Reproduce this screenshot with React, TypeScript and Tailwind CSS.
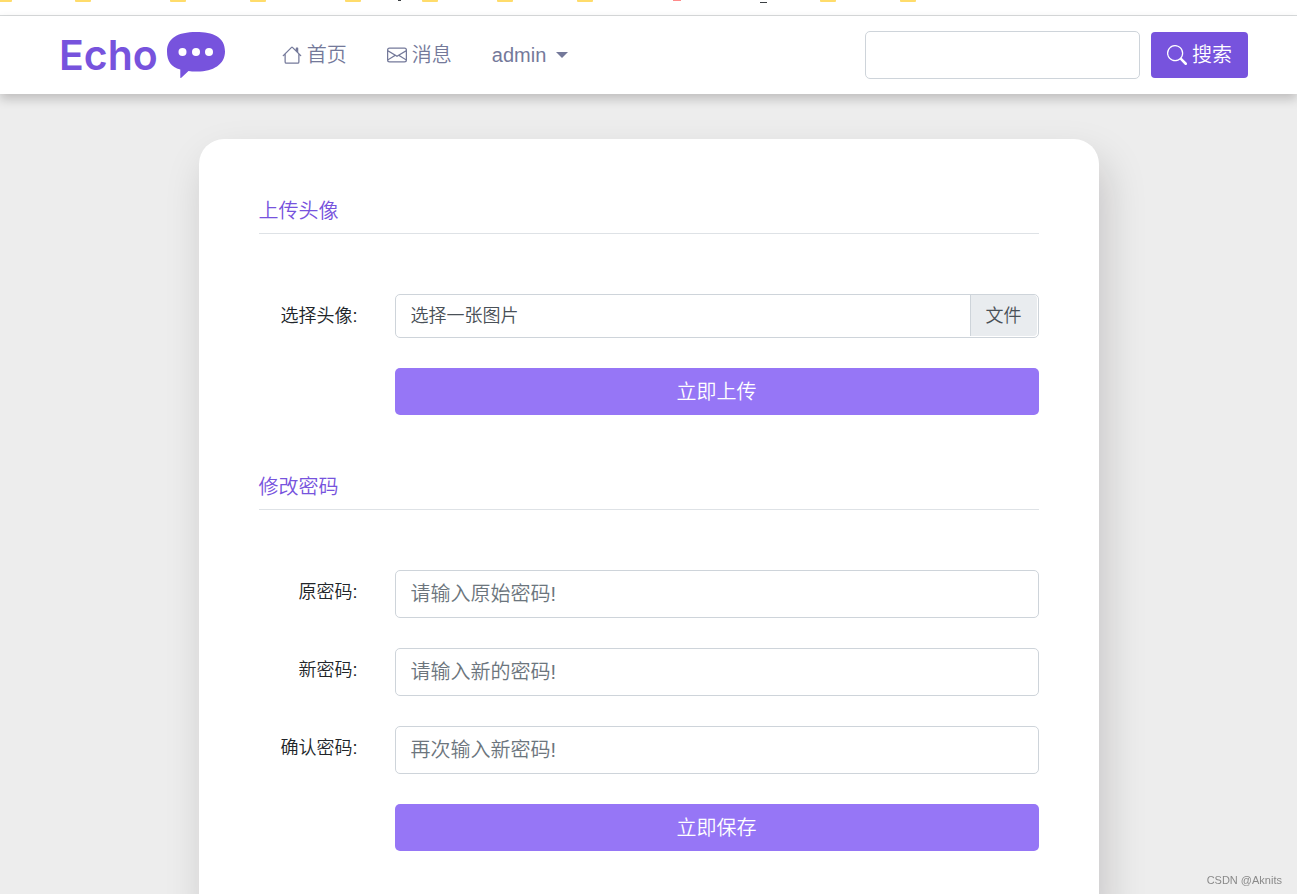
import { ReactNode, useState } from "react";
import { BsEnvelope, BsHouse, BsSearch } from "react-icons/bs";

const passwordFields = [
  { id: "oldPassword", label: "原密码:", placeholder: "请输入原始密码!" },
  { id: "newPassword", label: "新密码:", placeholder: "请输入新的密码!" },
  { id: "confirmPassword", label: "确认密码:", placeholder: "再次输入新密码!" },
];

const folders = [-4, 75, 170, 250, 345, 422, 497, 577, 820, 900];

export default function App() {
  return (
    <div className="min-h-screen bg-[#ededed] font-['Liberation_Sans','Noto_Sans_CJK_SC',sans-serif] font-[350] text-[#212529]">
      <BookmarkStrip />
      <Header />
      <main className="px-5 pt-[45px]">
        <div className="mx-auto max-w-[900px] rounded-t-[25px] bg-white p-[60px] shadow-[7px_20px_40px_rgba(20,0,10,0.17)]">
          <AvatarForm />
          <PasswordForm />
        </div>
      </main>
      <p className="fixed right-[15px] bottom-[6px] text-[11px] leading-4 text-[#8a8a8a]">
        CSDN @Aknits
      </p>
    </div>
  );
}

// bottom edge of the browser's bookmark bar
function BookmarkStrip() {
  return (
    <div className="h-4 overflow-hidden border-b border-[#d9dcdd] bg-white">
      <svg width="920" height="4" aria-hidden="true">
        {folders.map((x) => (
          <path
            key={x}
            d={`M${x} 0h16v1q0 1-1 1h-14q-1 0-1-1z`}
            fill="#ffdc6b"
          />
        ))}
        <rect x="398" width="3" height="1" fill="#3c4043" />
        <rect x="673" width="8" height="1" fill="#ff8a8a" />
        <rect x="760" y="2" width="7" height="1" fill="#3c4043" />
      </svg>
    </div>
  );
}

function Logo() {
  return (
    <a href="#" className="flex items-center gap-2 text-[#7753dd]">
      <span className="font-['Inter',sans-serif] text-[41px] leading-[48px] font-semibold">
        Echo
      </span>
      <svg width="60" height="48" viewBox="0 0 60 48" aria-hidden="true">
        <path
          d="M30 1C47 1 59 6 59 20.500C59 34 46 41 30 40.500C27 40.500 25 40.400 22.500 40L15 47Q14.500 47.200 14.300 46.500V38.500C5 36 1 30 1 20.500C1 7 12 1 30 1Z"
          fill="#7753dd"
        />
        <circle cx="16.500" cy="21" r="4" fill="#fff" />
        <circle cx="30" cy="21" r="4" fill="#fff" />
        <circle cx="43" cy="21" r="4" fill="#fff" />
      </svg>
    </a>
  );
}

function Header() {
  return (
    <header className="relative flex h-[78px] items-center bg-white pr-[49px] pl-[59px] shadow-[0_5px_10px_rgba(10,0,0,0.2)]">
      <Logo />
      <nav className="ml-[56px] flex items-center gap-10 text-xl text-[#74799a]">
        <a href="#" className="flex items-center gap-[5px]">
          <BsHouse />
          首页
        </a>
        <a href="#" className="flex items-center gap-[5px]">
          <BsEnvelope />
          消息
        </a>
        <button type="button" className="flex items-center gap-[10px]">
          admin
          <svg width="12" height="6" viewBox="0 0 12 6" aria-hidden="true">
            <path d="M0 0h12L6 6z" fill="currentColor" />
          </svg>
        </button>
      </nav>
      <form
        className="ml-auto flex items-center gap-[11px]"
        onSubmit={(e) => e.preventDefault()}
      >
        <input
          type="search"
          aria-label="搜索"
          className="h-12 w-[275px] rounded-[5px] border border-[#ced4da] px-4 text-xl outline-none"
        />
        <button
          type="submit"
          className="flex h-[46px] items-center gap-[5px] rounded bg-[#7753dd] px-4 text-xl text-white"
        >
          <BsSearch />
          搜索
        </button>
      </form>
    </header>
  );
}

function SectionTitle({ children }: { children: ReactNode }) {
  return (
    <h2 className="mb-[60px] border-b border-[#dee2e6] pb-[10px] text-xl leading-6 text-[#7753dd]">
      {children}
    </h2>
  );
}

function Row({
  id,
  label,
  children,
}: {
  id?: string;
  label?: string;
  children: ReactNode;
}) {
  return (
    <div className="flex items-start gap-[37px]">
      <div className="w-[99px] shrink-0 text-right">
        {label && (
          <label htmlFor={id} className="text-lg leading-[44px]">
            {label}
          </label>
        )}
      </div>
      <div className="min-w-0 flex-1">{children}</div>
    </div>
  );
}

function SubmitButton({ children }: { children: ReactNode }) {
  return (
    <button
      type="submit"
      className="h-[47px] w-full rounded-[5px] bg-[#9676f6] text-xl text-white"
    >
      {children}
    </button>
  );
}

function AvatarForm() {
  const [fileName, setFileName] = useState("选择一张图片");

  return (
    <form onSubmit={(e) => e.preventDefault()}>
      <SectionTitle>上传头像</SectionTitle>
      <div className="flex flex-col gap-[30px]">
        <Row id="avatar" label="选择头像:">
          <input
            id="avatar"
            type="file"
            className="sr-only"
            onChange={(e) =>
              setFileName(e.target.files?.[0]?.name || "选择一张图片")
            }
          />
          <label
            htmlFor="avatar"
            className="flex h-11 items-stretch rounded-[5px] border border-[#ced4da] pr-px pb-px text-lg leading-[42px] text-[#495057]"
          >
            <span className="flex-1 truncate pl-[15px]">{fileName}</span>
            <span className="rounded-r border-l border-[#ced4da] bg-[#e9ecef] px-[15px]">
              文件
            </span>
          </label>
        </Row>
        <Row>
          <SubmitButton>立即上传</SubmitButton>
        </Row>
      </div>
    </form>
  );
}

function PasswordForm() {
  return (
    <form className="mt-[60px]" onSubmit={(e) => e.preventDefault()}>
      <SectionTitle>修改密码</SectionTitle>
      <div className="flex flex-col gap-[30px]">
        {passwordFields.map((field) => (
          <Row key={field.id} id={field.id} label={field.label}>
            <input
              id={field.id}
              type="password"
              placeholder={field.placeholder}
              className="block h-12 w-full rounded-[5px] border border-[#ced4da] px-[15px] text-xl outline-none placeholder:text-[#6c757d]"
            />
          </Row>
        ))}
        <Row>
          <SubmitButton>立即保存</SubmitButton>
        </Row>
      </div>
    </form>
  );
}
